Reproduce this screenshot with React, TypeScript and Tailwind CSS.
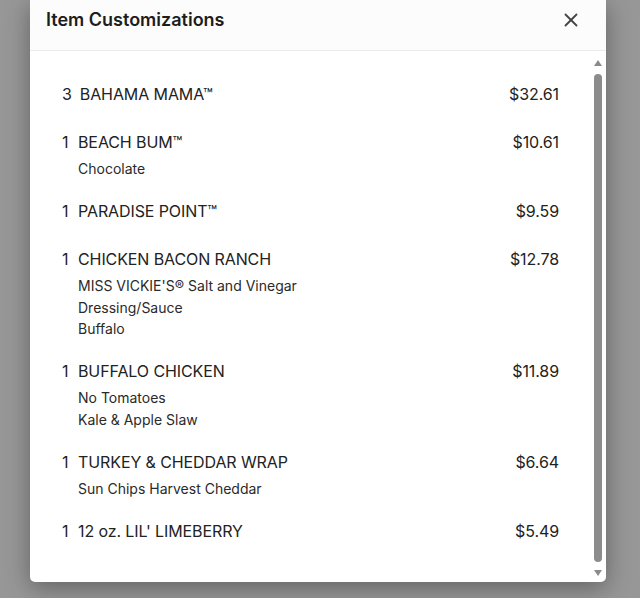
import { X } from 'lucide-react';

interface Item {
  qty: number;
  name: string;
  price: string;
  subs?: string[];
}

const items: Item[] = [
  { qty: 3, name: 'BAHAMA MAMA™', price: '$32.61' },
  { qty: 1, name: 'BEACH BUM™', price: '$10.61', subs: ['Chocolate'] },
  { qty: 1, name: 'PARADISE POINT™', price: '$9.59' },
  {
    qty: 1,
    name: 'CHICKEN BACON RANCH',
    price: '$12.78',
    subs: ["MISS VICKIE'S® Salt and Vinegar", 'Dressing/Sauce', 'Buffalo'],
  },
  { qty: 1, name: 'BUFFALO CHICKEN', price: '$11.89', subs: ['No Tomatoes', 'Kale & Apple Slaw'] },
  { qty: 1, name: 'TURKEY & CHEDDAR WRAP', price: '$6.64', subs: ['Sun Chips Harvest Cheddar'] },
  { qty: 1, name: "12 oz. LIL' LIMEBERRY", price: '$5.49' },
];

export default function App() {
  return (
    <div
      className="w-[640px] h-[598px] overflow-hidden bg-[#979797]"
      style={{ fontFamily: 'Inter, "Noto Sans", sans-serif' }}
    >
      <div className="ml-[30px] w-[576px] h-[582px] flex flex-col bg-white rounded-b-[5px] shadow-[0_6px_24px_rgba(0,0,0,0.35)] overflow-hidden">
        {/* Header */}
        <div className="h-[51px] shrink-0 flex items-start justify-between pl-4 pr-[24px] pt-[8px] bg-[#fcfcfc] border-b border-[#ebebeb]">
          <span className="text-[18px] leading-6 font-semibold text-[#1d1d1d]">Item Customizations</span>
          <button className="mt-[1px] text-[#444]">
            <X size={22} strokeWidth={2} />
          </button>
        </div>

        <div className="flex-1 flex min-h-0">
          {/* List */}
          <div className="flex-1 flex flex-col gap-6 pt-[31px] pl-8 pr-[31px]">
            {items.map((it, i) => (
              <div key={i} className="flex flex-col">
                <div className="flex items-start justify-between text-[16px] leading-6 text-[#222] tracking-[-0.1px]">
                  <div className="flex">
                    <span className="mr-2 min-w-[8px]">{it.qty}</span>
                    <span>{it.name}</span>
                  </div>
                  <span>{it.price}</span>
                </div>
                {it.subs && (
                  <div className="pl-4 mt-1 -mb-[4.5px] flex flex-col text-[14px] leading-[21.5px] text-[#2a2a2a]">
                    {it.subs.map(s => (
                      <span key={s}>{s}</span>
                    ))}
                  </div>
                )}
              </div>
            ))}
          </div>

          {/* Scrollbar */}
          <div className="w-[15px] shrink-0 flex flex-col items-center pt-[9px] pb-[6px] mr-[1px]">
            <div className="w-0 h-0 border-l-[4px] border-r-[4px] border-b-[6px] border-l-transparent border-r-transparent border-b-[#8a8a8a]" />
            <div className="flex-1 w-[8px] mt-[8px] mb-[8px] rounded-full bg-[#8c8c8c]" />
            <div className="w-0 h-0 border-l-[4px] border-r-[4px] border-t-[6px] border-l-transparent border-r-transparent border-t-[#8a8a8a]" />
          </div>
        </div>
      </div>
    </div>
  );
}
